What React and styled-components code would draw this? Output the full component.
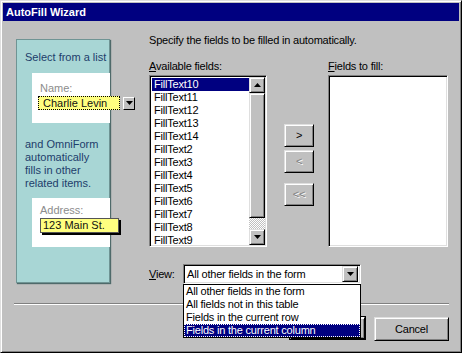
import React from 'react'
import styled, { createGlobalStyle } from 'styled-components'

const Global = createGlobalStyle`
 body {
  margin: 0;
  background: #c0c0c0;
  font-family: "Liberation Sans", Arial, sans-serif;
  font-size: 11px;
 }
`

const Window = styled.div`
 width: 462px;
 height: 353px;
 box-sizing: border-box;
 background: #c0c0c0;
 border: 1px solid;
 border-color: #dfdfdf #000 #000 #dfdfdf;
 box-shadow: inset 1px 1px #fff, inset -1px -1px #808080;
 padding: 2px;
 display: flex;
 flex-direction: column;
`

const TitleBar = styled.div`
 height: 18px;
 background: #000080;
 color: #fff;
 font-weight: bold;
 font-size: 11px;
 display: flex;
 align-items: center;
 padding-left: 3px;
`

const Body = styled.div`
 flex: 1;
 display: flex;
 flex-direction: column;
 padding: 13px 10px 9px 11px;
 color: #000;
 line-height: 13px;
 letter-spacing: -0.2px;
`

const MainRow = styled.div`
 display: flex;
 align-items: flex-start;
`

const HintPanel = styled.div`
 width: 94px;
 height: 244px;
 box-sizing: border-box;
 margin: 5px 0 0 2px;
 padding: 11px 0 0 8px;
 background: #a8d6d5;
 border: 1px solid #6f9494;
 box-shadow: 1px 1px 1px #4f6a6a;
 color: #1d3d6b;
 letter-spacing: 0;
`

const SampleCard = styled.div`
 background: #fff;
 height: ${(p) => p.h}px;
 box-sizing: border-box;
 margin: ${(p) => p.top}px -1px 0 7px;
 padding: ${(p) => p.pad}px 0 0 8px;
 color: #8c8c8c;
`

const FieldRow = styled.div`
 display: flex;
 align-items: center;
 margin: 1px 0 0 -2px;
 width: 120px;
`

const DottedField = styled.div`
 flex-shrink: 0;
 width: 82px;
 height: 14px;
 box-sizing: border-box;
 background: #ffff80;
 border: 1px dotted #000;
 color: #111;
 padding-left: 4px;
 line-height: 12px;
 white-space: nowrap;
`

const MiniDrop = styled.div`
 flex-shrink: 0;
 width: 12px;
 height: 13px;
 margin-left: 3px;
 box-sizing: border-box;
 background: #c0c0c0;
 border: 1px solid;
 border-color: #fff #000 #000 #fff;
 display: flex;
 align-items: center;
 justify-content: center;
`

const FilledField = styled.div`
 width: 79px;
 height: 15px;
 box-sizing: border-box;
 margin-top: 1px;
 background: #ffff80;
 border: 1px solid #555;
 box-shadow: 2px 2px 0 #000;
 color: #111;
 padding-left: 2px;
 line-height: 13px;
 white-space: nowrap;
`

const HintText = styled.div`
 margin-top: 15px;
`

const Content = styled.div`
 margin-left: 39px;
 width: 300px;
 display: flex;
 flex-direction: column;
`

const LabelRow = styled.div`
 display: flex;
 margin-top: 13px;
`

const Label = styled.div`
 width: ${(p) => p.w || 'auto'};
`

const ListsRow = styled.div`
 display: flex;
 margin-top: 2px;
 height: 172px;
`

const Sunken = styled.div`
 box-sizing: border-box;
 background: #fff;
 border: 1px solid;
 border-color: #808080 #fff #fff #808080;
 box-shadow: inset 1px 1px #000, inset -1px -1px #dfdfdf;
 padding: 2px;
`

const ListBox = styled(Sunken)`
 width: ${(p) => p.w}px;
 height: 172px;
 display: flex;
 overflow: hidden;
`

const Items = styled.div`
 flex: 1;
`

const Item = styled.div`
 height: 13px;
 padding-left: 2px;
 background: ${(p) => (p.selected ? '#000080' : 'transparent')};
 color: ${(p) => (p.selected ? '#fff' : '#000')};
 white-space: nowrap;
`

const ScrollBar = styled.div`
 width: 16px;
 display: flex;
 flex-direction: column;
 margin: -1px -1px -1px 0;
`

const RaisedBox = styled.div`
 box-sizing: border-box;
 background: #c0c0c0;
 border: 1px solid;
 border-color: #dfdfdf #000 #000 #dfdfdf;
 box-shadow: inset 1px 1px #fff, inset -1px -1px #808080;
`

const ScrollButton = styled(RaisedBox)`
 height: 16px;
 display: flex;
 align-items: center;
 justify-content: center;
`

const Thumb = styled(RaisedBox)`
 height: 125px;
`

const Track = styled.div`
 flex: 1;
 background: repeating-conic-gradient(#fff 0 25%, #c0c0c0 0 50%) 0 0 / 2px 2px;
`

const MoveColumn = styled.div`
 width: 30px;
 margin: 0 14px 0 17px;
 padding-top: 49px;
 display: flex;
 flex-direction: column;
`

const PushButton = styled(RaisedBox)`
 width: ${(p) => p.w || 30}px;
 height: ${(p) => p.h || 23}px;
 margin-top: ${(p) => p.gap || 0}px;
 display: flex;
 align-items: center;
 justify-content: center;
 color: ${(p) => (p.disabled ? '#808080' : '#000')};
 text-shadow: ${(p) => (p.disabled ? '1px 1px #fff' : 'none')};
`

const DefaultButton = styled(PushButton)`
 outline: 1px solid #000;
 border-color: #fff #000 #000 #fff;
`

const ViewRow = styled.div`
 display: flex;
 align-items: center;
 margin-top: 17px;
`

const Combo = styled(Sunken)`
 position: relative;
 width: 178px;
 height: 20px;
 padding: 2px 2px 2px 3px;
 display: flex;
 align-items: center;
 justify-content: space-between;
`

const ComboButton = styled(RaisedBox)`
 width: 16px;
 height: 16px;
 display: flex;
 align-items: center;
 justify-content: center;
`

const DropList = styled.div`
 position: absolute;
 top: 100%;
 left: -1px;
 width: 178px;
 box-sizing: border-box;
 margin-top: 1px;
 background: #fff;
 border: 1px solid #000;
 z-index: 5;
`

const DropItem = styled(Item)`
 outline: ${(p) => (p.selected ? '1px dotted #fff' : 'none')};
 outline-offset: -1px;
`

const Separator = styled.div`
 margin-top: 19px;
 border-top: 1px solid #808080;
 border-bottom: 1px solid #fff;
`

const ButtonRow = styled.div`
 display: flex;
 align-items: flex-start;
 justify-content: flex-end;
 gap: 9px;
 margin-top: 12px;
`

const Under = styled.span`
 text-decoration: underline;
`

const Arrow = ({ up }) => (
 <svg width="7" height="4" viewBox="0 0 7 4">
  <path d={up ? 'M3.5 0 L7 4 L0 4 Z' : 'M0 0 L7 0 L3.5 4 Z'} fill="#000" />
 </svg>
)

const fields = [
 'FillText10',
 'FillText11',
 'FillText12',
 'FillText13',
 'FillText14',
 'FillText2',
 'FillText3',
 'FillText4',
 'FillText5',
 'FillText6',
 'FillText7',
 'FillText8',
 'FillText9',
]

const viewOptions = [
 'All other fields in the form',
 'All fields not in this table',
 'Fields in the current row',
 'Fields in the current column',
]

const App = () => (
 <>
  <Global />
  <Window>
   <TitleBar>AutoFill Wizard</TitleBar>
   <Body>
    <MainRow>
     <HintPanel>
      Select from a list
      <SampleCard h={50} top={9} pad={9}>
       Name:
       <FieldRow>
        <DottedField>Charlie Levin</DottedField>
        <MiniDrop>
         <Arrow />
        </MiniDrop>
       </FieldRow>
      </SampleCard>
      <HintText>
       and OmniForm
       <br />
       automatically
       <br />
       fills in other
       <br />
       related items.
      </HintText>
      <SampleCard h={49} top={8} pad={6}>
       Address:
       <FilledField>123 Main St.</FilledField>
      </SampleCard>
     </HintPanel>
     <Content>
      <div>Specify the fields to be filled in automatically.</div>
      <LabelRow>
       <Label w="179px">
        <Under>A</Under>vailable fields:
       </Label>
       <Label>
        <Under>F</Under>ields to fill:
       </Label>
      </LabelRow>
      <ListsRow>
       <ListBox w={118}>
        <Items>
         {fields.map((f, i) => (
          <Item key={f} selected={i === 0}>
           {f}
          </Item>
         ))}
        </Items>
        <ScrollBar>
         <ScrollButton>
          <Arrow up />
         </ScrollButton>
         <Thumb />
         <Track />
         <ScrollButton>
          <Arrow />
         </ScrollButton>
        </ScrollBar>
       </ListBox>
       <MoveColumn>
        <PushButton>&gt;</PushButton>
        <PushButton gap={3} disabled>
         &lt;
        </PushButton>
        <PushButton gap={10} disabled>
         &lt;&lt;
        </PushButton>
       </MoveColumn>
       <ListBox w={120} />
      </ListsRow>
      <ViewRow>
       <Label w="34px">
        <Under>V</Under>iew:
       </Label>
       <Combo>
        <span>All other fields in the form</span>
        <ComboButton>
         <Arrow />
        </ComboButton>
        <DropList>
         {viewOptions.map((o, i) => (
          <DropItem key={o} selected={i === viewOptions.length - 1}>
           {o}
          </DropItem>
         ))}
        </DropList>
       </Combo>
      </ViewRow>
     </Content>
    </MainRow>
    <Separator />
    <ButtonRow>
     {/* default button mostly hidden behind the open drop-down list */}
     <DefaultButton w={75} h={22} />
     <PushButton w={75} h={24}>
      Cancel
     </PushButton>
    </ButtonRow>
   </Body>
  </Window>
 </>
)

export default App
